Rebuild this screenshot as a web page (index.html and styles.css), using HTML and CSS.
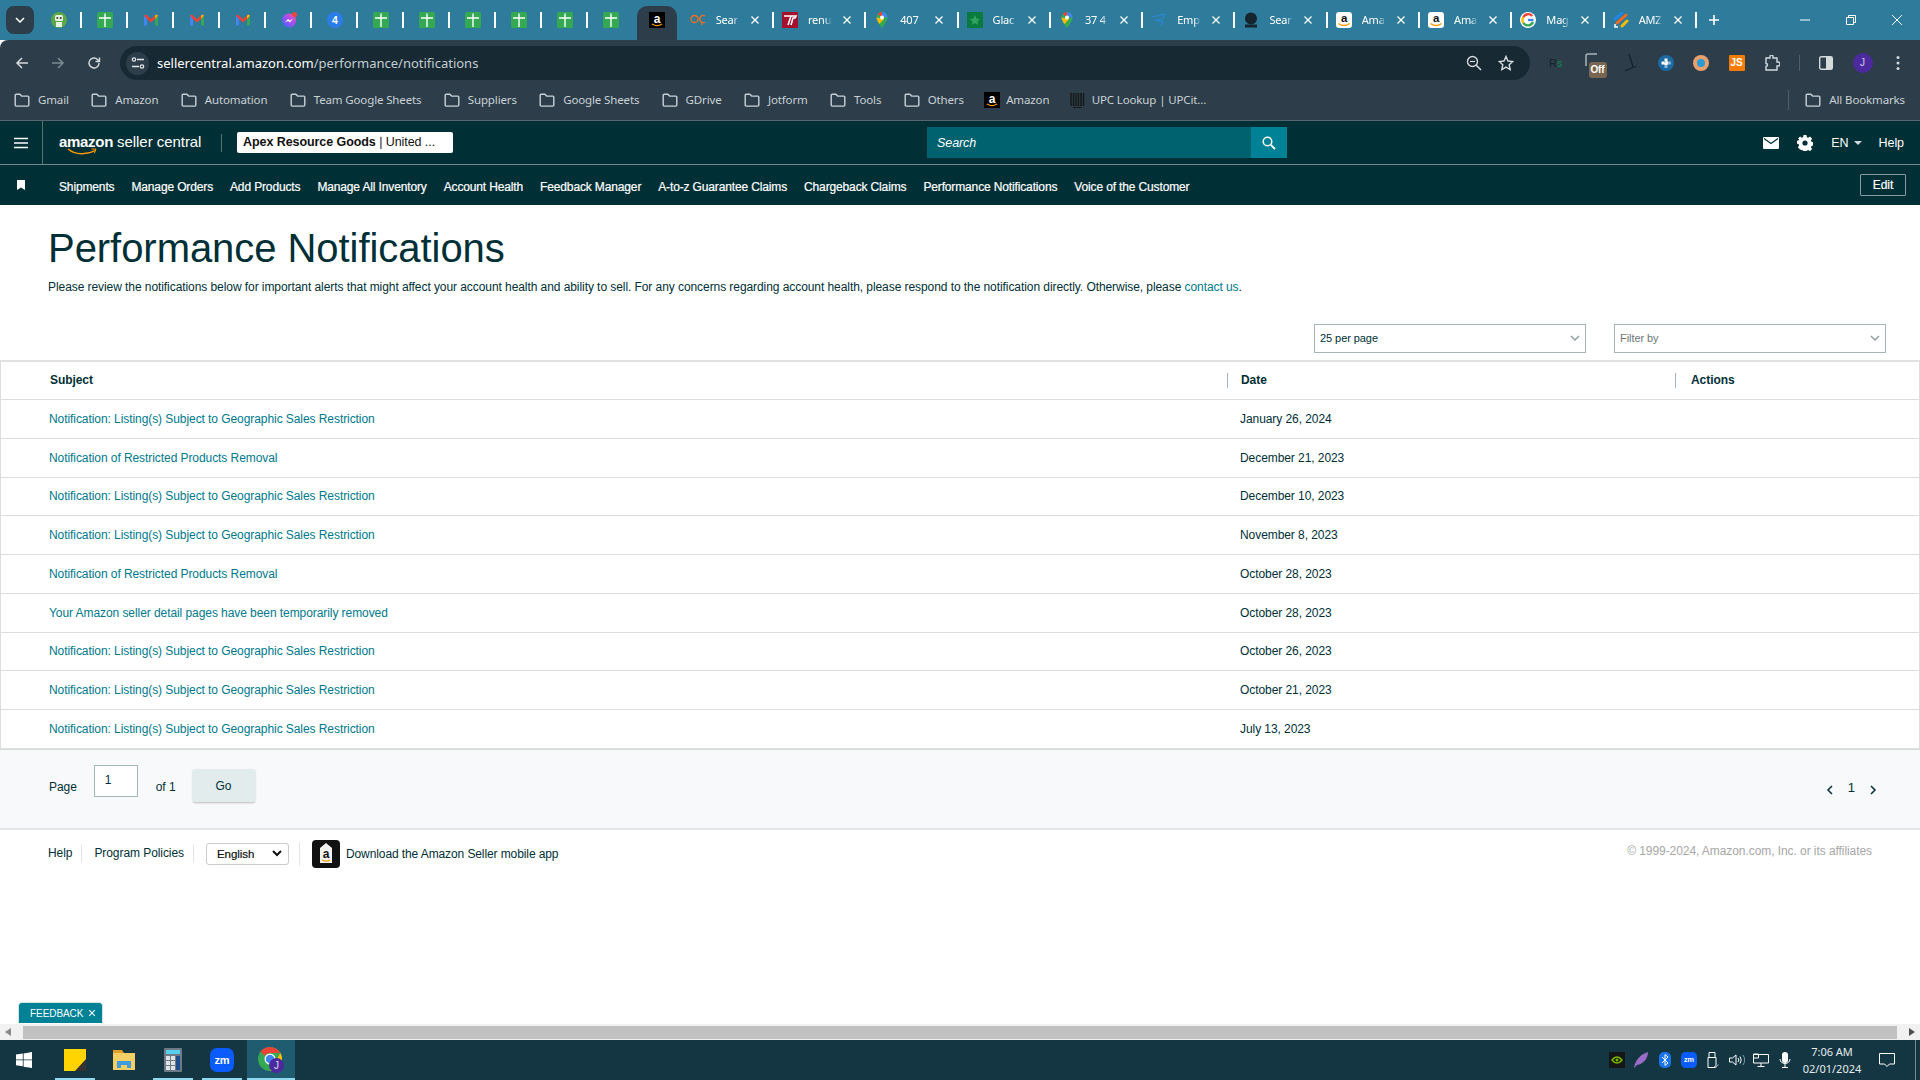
FILE: index.html
```html
<!DOCTYPE html>
<html lang="en">
<head>
<meta charset="utf-8">
<title>Performance Notifications</title>
<link rel="stylesheet" href="styles.css">
</head>
<body>
<svg class="defs" width="0" height="0" aria-hidden="true">
  <symbol id="folder" viewBox="0 0 16 16"><path d="M1.2 3.2a1 1 0 0 1 1-1h3.6l1.8 1.9h6.2a1 1 0 0 1 1 1v8a1 1 0 0 1-1 1H2.2a1 1 0 0 1-1-1z" fill="none" stroke="#c9d1d6" stroke-width="1.4"/></symbol>
  <symbol id="sheet" viewBox="0 0 16 16"><rect width="16" height="16" rx="1.5" fill="#34a853"/><path d="M2 6h12M8 1.500V15" stroke="#fff" stroke-width="1.400"/></symbol>
  <symbol id="gmail" viewBox="0 0 16 16"><path d="M1 3.500v10h3V6z" fill="#4285f4"/><path d="M12 6v7.500h3v-10z" fill="#34a853"/><path d="M1 3.500l2-1 5 4.500 5-4.500 2 1L12 7l-4 3.500L4 7z" fill="#ea4335"/><path d="M12 4l1-1.500 2 1L12 6.800z" fill="#fbbc04"/></symbol>
  <symbol id="amz" viewBox="0 0 16 16"><rect width="16" height="16" fill="#000"/><text x="8" y="10.500" text-anchor="middle" font-family="Liberation Sans" font-weight="700" font-size="12" fill="#fff">a</text><path d="M3 12c3 2 7 2 10 0" fill="none" stroke="#f90" stroke-width="1.300"/></symbol>
  <symbol id="amzw" viewBox="0 0 16 16"><rect width="16" height="16" rx="3" fill="#fff"/><text x="8" y="10" text-anchor="middle" font-family="Liberation Sans" font-weight="700" font-size="11.500" fill="#111">a</text><path d="M2.500 11.500c3.500 2.600 7.500 2.600 11 0" fill="none" stroke="#f90" stroke-width="1.500"/></symbol>
  <symbol id="maps" viewBox="0 0 16 16"><path d="M8 0a5.500 5.500 0 0 0-5.500 5.500C2.500 9.500 8 16 8 16s5.500-6.500 5.500-10.500A5.500 5.500 0 0 0 8 0z" fill="#34a853"/><path d="M8 0a5.500 5.500 0 0 0-4.200 2l4.200 3.500z" fill="#ea4335"/><path d="M8 0a5.500 5.500 0 0 1 5.500 5.500L8 5.500z" fill="#4285f4"/><path d="M2.500 5.500C2.500 7.500 4 10 5.500 12L10 7z" fill="#fbbc04"/><circle cx="8" cy="5.500" r="2" fill="#fff"/></symbol>
  <symbol id="close" viewBox="0 0 10 10"><path d="M1.500 1.500l7 7M8.500 1.500l-7 7" stroke="#fff" stroke-width="1.300"/></symbol>
  <symbol id="zm" viewBox="0 0 24 24"><rect width="24" height="24" rx="7" fill="#0b5cff"/><text x="12" y="15.500" text-anchor="middle" font-family="Liberation Sans" font-weight="700" font-size="11" fill="#fff">zm</text></symbol>
</svg>

<div class="page">
  <header class="tabstrip">
    <div class="tabmenu"><svg width="10" height="6" viewBox="0 0 10 6"><path d="M1 1l4 4 4-4" fill="none" stroke="#fff" stroke-width="1.500"/></svg></div>
    <div class="ptab sep"><svg class="fav" viewBox="0 0 16 16"><circle cx="8" cy="8" r="8" fill="#5aa846"/><rect x="4" y="3" width="8" height="6" rx="1.500" fill="#e8f2e4"/><circle cx="6.300" cy="6" r="1" fill="#333"/><circle cx="9.700" cy="6" r="1" fill="#333"/><rect x="5" y="10" width="6" height="5" fill="#e8f2e4"/></svg></div>
    <div class="ptab sep"><svg class="fav"><use href="#sheet"/></svg></div>
    <div class="ptab sep"><svg class="fav"><use href="#gmail"/></svg></div>
    <div class="ptab sep"><svg class="fav"><use href="#gmail"/></svg></div>
    <div class="ptab sep"><svg class="fav"><use href="#gmail"/></svg></div>
    <div class="ptab sep"><svg class="fav" viewBox="0 0 16 16"><defs><linearGradient id="ms" x1="0" y1="1" x2="1" y2="0"><stop offset="0" stop-color="#2f6bff"/><stop offset=".6" stop-color="#b44bf0"/><stop offset="1" stop-color="#ff5c7a"/></linearGradient></defs><circle cx="8" cy="8.500" r="7" fill="url(#ms)"/><path d="M4 10.500l3-3.500 2 1.500 3-2-3 4-2-1.500z" fill="#fff"/><circle cx="13.500" cy="2.500" r="2.500" fill="#f0453a"/></svg></div>
    <div class="ptab sep"><svg class="fav" viewBox="0 0 16 16"><circle cx="8" cy="8" r="8" fill="#2b7de9"/><text x="8" y="11.800" text-anchor="middle" font-family="Liberation Sans" font-weight="700" font-size="10.500" fill="#fff">4</text></svg></div>
    <div class="ptab sep"><svg class="fav"><use href="#sheet"/></svg></div>
    <div class="ptab sep"><svg class="fav"><use href="#sheet"/></svg></div>
    <div class="ptab sep"><svg class="fav"><use href="#sheet"/></svg></div>
    <div class="ptab sep"><svg class="fav"><use href="#sheet"/></svg></div>
    <div class="ptab sep"><svg class="fav"><use href="#sheet"/></svg></div>
    <div class="ptab"><svg class="fav"><use href="#sheet"/></svg></div>
    <div class="activetab"><svg class="fav"><use href="#amz"/></svg></div>
    <div class="tab sep"><svg class="fav" viewBox="0 0 16 16"><circle cx="4.500" cy="7" r="3.500" fill="none" stroke="#f0701c" stroke-width="1.300"/><path d="M15 4a3.500 3.500 0 1 0 0 6M12 10v3" fill="none" stroke="#f0701c" stroke-width="1.300"/></svg><span class="tabtext">Sear</span><svg class="tabx"><use href="#close"/></svg></div>
    <div class="tab sep"><svg class="fav" viewBox="0 0 16 16"><rect width="16" height="16" fill="#a5112d"/><path d="M2 4h7L6 13M8 4h6l-1 2h-2l-2 7" fill="none" stroke="#fff" stroke-width="1.600"/></svg><span class="tabtext">renu</span><svg class="tabx"><use href="#close"/></svg></div>
    <div class="tab sep"><svg class="fav"><use href="#maps"/></svg><span class="tabtext">407</span><svg class="tabx"><use href="#close"/></svg></div>
    <div class="tab sep"><svg class="fav" viewBox="0 0 16 16"><rect width="16" height="16" fill="#0a7a3e"/><path d="M8 3l1.500 3.500L13 7l-2.500 2.500.5 3.500L8 11l-3 2 .5-3.500L3 7l3.500-.5z" fill="#2fa35f"/></svg><span class="tabtext">Glac</span><svg class="tabx"><use href="#close"/></svg></div>
    <div class="tab sep"><svg class="fav"><use href="#maps"/></svg><span class="tabtext">37 4</span><svg class="tabx"><use href="#close"/></svg></div>
    <div class="tab sep"><svg class="fav" viewBox="0 0 16 16"><path d="M1 5l13-3-2 5-8 1 8 2-3 4" fill="none" stroke="#2a86c8" stroke-width="1.300"/></svg><span class="tabtext">Emp</span><svg class="tabx"><use href="#close"/></svg></div>
    <div class="tab sep"><svg class="fav" viewBox="0 0 16 16"><circle cx="8" cy="6.500" r="6" fill="#15252e"/><rect x="2" y="12.500" width="12" height="3" fill="#15252e"/></svg><span class="tabtext">Sear</span><svg class="tabx"><use href="#close"/></svg></div>
    <div class="tab sep"><svg class="fav"><use href="#amzw"/></svg><span class="tabtext">Ama</span><svg class="tabx"><use href="#close"/></svg></div>
    <div class="tab sep"><svg class="fav"><use href="#amzw"/></svg><span class="tabtext">Ama</span><svg class="tabx"><use href="#close"/></svg></div>
    <div class="tab sep"><svg class="fav" viewBox="0 0 16 16"><circle cx="8" cy="8" r="8" fill="#fff"/><path d="M13.500 8H8" stroke="#4285f4" stroke-width="2.400"/><path d="M12.300 4A5.500 5.500 0 0 0 3.300 5.200" fill="none" stroke="#ea4335" stroke-width="2.400"/><path d="M3.300 5.200a5.500 5.500 0 0 0 0 5.600" fill="none" stroke="#fbbc04" stroke-width="2.400"/><path d="M3.300 10.800A5.500 5.500 0 0 0 13 10" fill="none" stroke="#34a853" stroke-width="2.400"/></svg><span class="tabtext">Mag</span><svg class="tabx"><use href="#close"/></svg></div>
    <div class="tab sep"><svg class="fav" viewBox="0 0 16 16"><path d="M2 7L9 1" stroke="#1e88e5" stroke-width="3" stroke-linecap="round"/><path d="M4 11l9-8" stroke="#f4691e" stroke-width="3" stroke-linecap="round"/><path d="M9 14l5-5" stroke="#fbbc04" stroke-width="3" stroke-linecap="round"/><path d="M2 12v3h3" fill="none" stroke="#fff" stroke-width="1.500"/></svg><span class="tabtext">AMZ</span><svg class="tabx"><use href="#close"/></svg></div>
    <svg class="newtab" viewBox="0 0 12 12"><path d="M6 1v10M1 6h10" stroke="#fff" stroke-width="1.600"/></svg>
    <div class="winctl">
      <svg width="10" height="10" viewBox="0 0 10 10"><path d="M0 5h10" stroke="#fff"/></svg>
      <svg width="10" height="10" viewBox="0 0 10 10"><path d="M.5 2.500h7v7h-7zM2.500 2.500v-2h7v7h-2" fill="none" stroke="#fff"/></svg>
      <svg width="10" height="10" viewBox="0 0 10 10"><path d="M0 0l10 10M10 0L0 10" stroke="#fff"/></svg>
    </div>
  </header>

  <div class="toolbar">
    <div class="navbtns">
      <svg width="14" height="14" viewBox="0 0 14 14"><path d="M13 7H2M7 2L2 7l5 5" fill="none" stroke="#d5dadd" stroke-width="1.500"/></svg>
      <svg width="14" height="14" viewBox="0 0 14 14"><path d="M1 7h11M7 2l5 5-5 5" fill="none" stroke="#7c8a93" stroke-width="1.500"/></svg>
      <svg width="14" height="14" viewBox="0 0 14 14"><path d="M12 7a5 5 0 1 1-1.500-3.600L12.500 5.500M12.500 1.500v4h-4" fill="none" stroke="#d5dadd" stroke-width="1.400"/></svg>
    </div>
    <div class="omnibox">
      <span class="chip"><svg width="14" height="12" viewBox="0 0 14 12"><path d="M6 2.500h7M1 9.500h7" stroke="#e3e7ea" stroke-width="1.400"/><circle cx="3" cy="2.500" r="1.700" fill="none" stroke="#e3e7ea" stroke-width="1.200"/><circle cx="11" cy="9.500" r="1.700" fill="none" stroke="#e3e7ea" stroke-width="1.200"/></svg></span>
      <span class="url">sellercentral.amazon.com<span class="urlpath">/performance/notifications</span></span>
      <svg class="omni-zoom" width="16" height="16" viewBox="0 0 16 16"><circle cx="6.500" cy="6.500" r="5" fill="none" stroke="#d5dadd" stroke-width="1.400"/><path d="M10.300 10.300L15 15" stroke="#d5dadd" stroke-width="1.600"/><path d="M4 6.500h5" stroke="#d5dadd" stroke-width="1.200"/></svg>
      <svg class="omni-star" width="16" height="16" viewBox="0 0 16 16"><path d="M8 1.500l2 4.500 4.800.5-3.600 3.200 1 4.800L8 12.100l-4.200 2.400 1-4.800L1.200 6.500 6 6z" fill="none" stroke="#d5dadd" stroke-width="1.400"/></svg>
    </div>
    <div class="exts">
      <span class="ext-rs"><b class="rs-r">R</b><b class="rs-s">s</b></span>
      <span class="ext-off"><svg width="14" height="14" viewBox="0 0 14 14"><path d="M1 13V3a2 2 0 0 1 2-2h9" fill="none" stroke="#aab4ba" stroke-width="1.500"/></svg><span class="offbadge">Off</span></span>
      <svg width="14" height="20" viewBox="0 0 14 20"><path d="M5 1l4 13M1 18l11-5" stroke="#16222a" stroke-width="1.300"/></svg>
      <svg width="16" height="16" viewBox="0 0 16 16"><circle cx="8" cy="8" r="8" fill="#1c6aa5"/><path d="M8 3.500v9M3.500 8h9" stroke="#fff" stroke-width="3" stroke-dasharray="3 1"/></svg>
      <svg width="16" height="16" viewBox="0 0 16 16"><circle cx="8" cy="8" r="8" fill="#e9a06f"/><circle cx="8" cy="8" r="4" fill="#2b9bd6"/></svg>
      <span class="ext-js">JS</span>
      <svg width="16" height="16" viewBox="0 0 16 16"><path d="M2 3h4V1.500a1.500 1.500 0 0 1 3 0V3h4v4h1a1.500 1.500 0 0 1 0 4h-1v4H2v-3.500a1.500 1.500 0 0 0 0-3z" fill="none" stroke="#d5dadd" stroke-width="1.400"/></svg>
      <span class="tooldiv"></span>
      <svg width="14" height="14" viewBox="0 0 14 14"><rect x=".7" y=".7" width="12.600" height="12.600" rx="1.500" fill="none" stroke="#d5dadd" stroke-width="1.400"/><rect x="7" y="1" width="6" height="12" fill="#d5dadd"/></svg>
      <span class="avatar">J</span>
      <svg class="dots" width="4" height="16" viewBox="0 0 4 16"><circle cx="2" cy="2.500" r="1.500" fill="#d5dadd"/><circle cx="2" cy="8" r="1.500" fill="#d5dadd"/><circle cx="2" cy="13.500" r="1.500" fill="#d5dadd"/></svg>
    </div>
  </div>

  <nav class="bookmarks">
    <a class="bm"><svg class="bmi"><use href="#folder"/></svg>Gmail</a>
    <a class="bm"><svg class="bmi"><use href="#folder"/></svg>Amazon</a>
    <a class="bm"><svg class="bmi"><use href="#folder"/></svg>Automation</a>
    <a class="bm"><svg class="bmi"><use href="#folder"/></svg>Team Google Sheets</a>
    <a class="bm"><svg class="bmi"><use href="#folder"/></svg>Suppliers</a>
    <a class="bm"><svg class="bmi"><use href="#folder"/></svg>Google Sheets</a>
    <a class="bm"><svg class="bmi"><use href="#folder"/></svg>GDrive</a>
    <a class="bm"><svg class="bmi"><use href="#folder"/></svg>Jotform</a>
    <a class="bm"><svg class="bmi"><use href="#folder"/></svg>Tools</a>
    <a class="bm"><svg class="bmi"><use href="#folder"/></svg>Others</a>
    <a class="bm bm-fav"><svg class="bmi"><use href="#amz"/></svg>Amazon</a>
    <a class="bm bm-fav"><svg class="bmi" viewBox="0 0 16 16"><path d="M1 1v13M3.500 1v13M6 1v13M8.500 1v13M11 1v13M13.500 1v13" stroke="#16181a" stroke-width="1.500"/><path d="M3 15.500h9" stroke="#16181a"/></svg>UPC Lookup | UPCit...</a>
    <span class="bmdiv"></span>
    <a class="bm"><svg class="bmi"><use href="#folder"/></svg>All Bookmarks</a>
  </nav>

  <div class="sc-top">
    <button class="burger" aria-label="Menu"><svg width="14" height="12" viewBox="0 0 14 12"><path d="M0 1.500h14M0 6h14M0 10.500h14" stroke="#fff" stroke-width="1.500"/></svg></button>
    <div class="logo"><b class="logo-a">amazon</b><span class="logo-s">seller central</span><svg class="smile" width="30" height="8" viewBox="0 0 30 8"><path d="M1 1c7 6 19 6 27 1.500" fill="none" stroke="#f90" stroke-width="1.400"/><path d="M24.500 1H29l-1.500 4" fill="none" stroke="#f90" stroke-width="1"/></svg></div>
    <span class="logodiv"></span>
    <div class="acct"><b>Apex Resource Goods</b> | United ...</div>
    <div class="search"><span class="search-in">Search</span><span class="search-btn"><svg width="14" height="14" viewBox="0 0 14 14"><circle cx="5.500" cy="5.500" r="4.300" fill="none" stroke="#fff" stroke-width="1.500"/><path d="M8.800 8.800L13 13" stroke="#fff" stroke-width="1.800"/></svg></span></div>
    <div class="sc-right">
      <svg class="mail" width="16" height="12" viewBox="0 0 16 12"><rect width="16" height="12" rx="1" fill="#fff"/><path d="M1 1.500l7 5 7-5" fill="none" stroke="#002f36" stroke-width="1.300"/></svg>
      <svg class="gear" width="16" height="16" viewBox="0 0 16 16"><path d="M6.500 0h3l.4 2.200 1.300.6L13 1.600l2.100 2.100-1.200 1.800.6 1.300 2 .7v3l-2 .4-.6 1.300 1.200 1.900-2.100 2.100-1.800-1.200-1.300.6-.4 2.200h-3l-.4-2.200-1.300-.6L3 14.400.9 12.300l1.200-1.900-.6-1.300L-.5 8.700v-3l2-.3.6-1.300L.9 3.700 3 1.600l1.800 1.200 1.300-.6z" fill="#fff"/><circle cx="8" cy="8" r="2.600" fill="#002f36"/></svg>
      <span class="lang">EN</span><span class="caret"></span>
      <span class="sc-help">Help</span>
    </div>
  </div>

  <div class="sc-nav">
    <svg class="pin" width="8" height="10" viewBox="0 0 8 10"><path d="M0 0h8v10L4 7.500 0 10z" fill="#fff"/></svg>
    <a>Shipments</a><a>Manage Orders</a><a>Add Products</a><a>Manage All Inventory</a><a>Account Health</a><a>Feedback Manager</a><a>A-to-z Guarantee Claims</a><a>Chargeback Claims</a><a>Performance Notifications</a><a>Voice of the Customer</a>
    <button class="edit">Edit</button>
  </div>

  <main class="content">
    <h1 class="title">Performance Notifications</h1>
    <p class="desc">Please review the notifications below for important alerts that might affect your account health and ability to sell. For any concerns regarding account health, please respond to the notification directly. Otherwise, please <a class="link">contact us</a>.</p>
    <div class="controls">
      <div class="sel sel-page"><span>25 per page</span><svg width="10" height="6" viewBox="0 0 10 6"><path d="M1 1l4 4 4-4" fill="none" stroke="#8a9a9c" stroke-width="1.300"/></svg></div>
      <div class="sel sel-filter"><span class="muted">Filter by</span><svg width="10" height="6" viewBox="0 0 10 6"><path d="M1 1l4 4 4-4" fill="none" stroke="#8a9a9c" stroke-width="1.300"/></svg></div>
    </div>
    <table class="grid">
      <colgroup><col class="c1"><col class="c2"><col class="c3"></colgroup>
      <thead><tr><th>Subject</th><th class="th-d"><span>Date</span></th><th class="th-a"><span>Actions</span></th></tr></thead>
      <tbody>
        <tr><td><a class="link">Notification: Listing(s) Subject to Geographic Sales Restriction</a></td><td>January 26, 2024</td><td></td></tr>
        <tr><td><a class="link">Notification of Restricted Products Removal</a></td><td>December 21, 2023</td><td></td></tr>
        <tr><td><a class="link">Notification: Listing(s) Subject to Geographic Sales Restriction</a></td><td>December 10, 2023</td><td></td></tr>
        <tr><td><a class="link">Notification: Listing(s) Subject to Geographic Sales Restriction</a></td><td>November 8, 2023</td><td></td></tr>
        <tr><td><a class="link">Notification of Restricted Products Removal</a></td><td>October 28, 2023</td><td></td></tr>
        <tr><td><a class="link">Your Amazon seller detail pages have been temporarily removed</a></td><td>October 28, 2023</td><td></td></tr>
        <tr><td><a class="link">Notification: Listing(s) Subject to Geographic Sales Restriction</a></td><td>October 26, 2023</td><td></td></tr>
        <tr><td><a class="link">Notification: Listing(s) Subject to Geographic Sales Restriction</a></td><td>October 21, 2023</td><td></td></tr>
        <tr><td><a class="link">Notification: Listing(s) Subject to Geographic Sales Restriction</a></td><td>July 13, 2023</td><td></td></tr>
      </tbody>
    </table>
    <div class="pager">
      <span>Page</span><span class="pageinput">1</span><span>of 1</span><button class="go">Go</button>
      <div class="pager-r">
        <svg width="7" height="10" viewBox="0 0 7 10"><path d="M6 1L2 5l4 4" fill="none" stroke="#002f36" stroke-width="1.500"/></svg>
        <span class="pnum">1</span>
        <svg width="7" height="10" viewBox="0 0 7 10"><path d="M1 1l4 4-4 4" fill="none" stroke="#002f36" stroke-width="1.500"/></svg>
      </div>
    </div>
    <footer class="foot">
      <a class="foot-l">Help</a>
      <a class="foot-l foot-p">Program Policies</a>
      <div class="foot-lang"><span>English</span><svg width="10" height="7" viewBox="0 0 10 7"><path d="M1 1l4 4 4-4" fill="none" stroke="#111" stroke-width="2"/></svg></div>
      <span class="appsep"></span>
      <svg class="appicon" width="28" height="28" viewBox="0 0 28 28"><rect width="28" height="28" rx="4" fill="#111"/><path d="M8 8l6-5 6 5v15H8z" fill="#f2f2f2"/><text x="14" y="18" text-anchor="middle" font-family="Liberation Sans" font-weight="700" font-size="12" fill="#111">a</text><path d="M10 20c3 1.500 6 1.500 8 0" fill="none" stroke="#f90" stroke-width="1.200"/></svg>
      <span class="dl">Download the Amazon Seller mobile app</span>
      <span class="copy">© 1999-2024, Amazon.com, Inc. or its affiliates</span>
    </footer>
    <div class="feedback">FEEDBACK<svg width="8" height="8"><use href="#close"/></svg></div>
  </main>

  <div class="hscroll">
    <svg width="6" height="8" viewBox="0 0 6 8"><path d="M6 0v8L0 4z" fill="#8a8a8a"/></svg>
    <span class="thumb"></span>
    <svg width="6" height="8" viewBox="0 0 6 8"><path d="M0 0v8l6-4z" fill="#505050"/></svg>
  </div>

  <div class="taskbar">
    <span class="tb tb-win"><svg width="16" height="16" viewBox="0 0 16 16"><path d="M0 2.500l6.800-1v6H0zM7.600 1.400L16 0v7.500H7.600zM0 8.300h6.800v6l-6.800-1zM7.600 8.300H16V16l-8.400-1.300z" fill="#fff"/></svg></span>
    <span class="tb tb-on"><svg width="22" height="22" viewBox="0 0 22 22"><rect width="22" height="22" fill="#ffd400"/><path d="M22 10v12H11z" fill="#333"/></svg></span>
    <span class="tb"><svg width="22" height="20" viewBox="0 0 22 20"><path d="M0 0h9l2 3H0z" fill="#e0a028"/><rect y="3" width="22" height="17" fill="#f6cf64"/><path d="M4 18v-7h14v7h-4v-3h-6v3z" fill="#3d9be0"/></svg></span>
    <span class="tb tb-on"><svg width="18" height="24" viewBox="0 0 18 24"><rect width="18" height="24" rx="1" fill="#6e7b85"/><rect x="2" y="2" width="14" height="4" fill="#55d0ee"/><path d="M2 8h4v4H2zM7 8h4v4H7zM2 13h4v4H2zM7 13h4v4H7zM2 18h4v4H2zM7 18h4v4H7z" fill="#dfe4e8"/><rect x="12" y="8" width="4" height="14" fill="#1e4f8c"/></svg></span>
    <span class="tb tb-zm"><svg width="24" height="24"><use href="#zm"/></svg></span>
    <span class="tb tb-chrome"><svg width="26" height="26" viewBox="0 0 26 26"><circle cx="12" cy="12" r="12" fill="#34a853"/><path d="M12 0a12 12 0 0 1 10.400 6H12a6 6 0 0 0-5.200 3L2.500 4.500A12 12 0 0 1 12 0z" fill="#ea4335"/><path d="M22.400 6A12 12 0 0 1 12 24l5-9z" fill="#fbbc04"/><circle cx="12" cy="12" r="5.500" fill="#fff"/><circle cx="12" cy="12" r="4.300" fill="#4285f4"/><circle cx="18.500" cy="18.500" r="7.500" fill="#4b2a9e"/><text x="18.500" y="22" text-anchor="middle" font-family="Liberation Sans" font-size="10" fill="#e4dcf7">J</text></svg></span>
    <div class="tray">
      <div class="trayicons">
        <svg width="16" height="16" viewBox="0 0 16 16"><rect width="16" height="16" fill="#161616"/><path d="M3 8c3-4 7-4 10 0-3 4-7 4-10 0z" fill="none" stroke="#76b900" stroke-width="1.500"/><circle cx="8" cy="8" r="1.500" fill="#76b900"/></svg>
        <svg width="16" height="16" viewBox="0 0 16 16"><path d="M1 16C2 8 8 2 15 0c0 7-5 12-11 13z" fill="#9a6cc8"/></svg>
        <svg width="12" height="16" viewBox="0 0 12 16"><rect width="12" height="16" rx="5" fill="#1a73e8"/><path d="M3 5l6 6-3 2.500v-11L9 5l-6 6" fill="none" stroke="#fff"/></svg>
        <svg width="16" height="16"><use href="#zm"/></svg>
        <svg width="12" height="16" viewBox="0 0 12 16"><path d="M2 .5h6v5H2zM1 5.500h8v10H1z" fill="none" stroke="#fff"/><path d="M7 14l1.500 1.500 3-3" fill="none" stroke="#aaa"/></svg>
        <svg width="16" height="12" viewBox="0 0 16 12"><path d="M.5 4h3L7 1v10L3.500 8h-3z" fill="none" stroke="#fff"/><path d="M9 4a3 3 0 0 1 0 4M11 2.500a6 6 0 0 1 0 7" fill="none" stroke="#fff"/><path d="M14 1a9 9 0 0 1 0 10" fill="none" stroke="#7f9aa4"/></svg>
        <svg width="16" height="14" viewBox="0 0 16 14"><path d="M3 1.500h12.500v8.500H.5V1.500zM8 10v3M4.500 13.500h7M.5 1h5v4h-5z" fill="none" stroke="#fff"/></svg>
        <svg width="12" height="16" viewBox="0 0 12 16"><rect x="3" width="6" height="11" rx="3" fill="#fff"/><path d="M1 7c0 6 10 6 10 0M6 12v3M3 15.500h6" fill="none" stroke="#fff"/></svg>
      </div>
      <div class="clock"><span>7:06 AM</span><span>02/01/2024</span></div>
      <svg class="notif" width="16" height="14" viewBox="0 0 16 14"><path d="M.5.500h15v10.500h-5L8 13.500 5.500 11h-5z" fill="none" stroke="#fff"/></svg>
      <span class="showdesk"></span>
    </div>
  </div>
</div>
</body>
</html>
```

FILE: styles.css
```css
* { box-sizing: border-box; }
html, body { margin: 0; padding: 0; background: #fff; }
body { font-family: "Liberation Sans", Arial, sans-serif; font-size: 12px; letter-spacing: -.07px; color: #002f36; }
.defs { display: none; }
.page { width: 1920px; height: 1080px; display: flex; flex-direction: column; overflow: hidden; position: relative; }
svg { display: block; flex: none; }

.tabstrip { height: 40px; flex: none; background: #2e7b9b; display: flex; align-items: center; padding-left: 6px; }
.tabmenu { width: 28px; height: 28px; margin-right: 2px; border-radius: 8px; background: #2d3e4a; display: flex; align-items: center; justify-content: center; }
.fav { width: 16px; height: 16px; flex: none; }
.ptab { width: 46px; height: 16px; display: flex; align-items: center; justify-content: center; }
.sep { border-right: 2px solid #fff; }
.ptab.sep { padding-left: 2px; }
.activetab { width: 40px; height: 34px; margin: 6px 4.7px 0 3px; background: #2d3e4a; border-radius: 10px 10px 0 0; display: flex; align-items: center; justify-content: center; padding-bottom: 6px; }
.tab { width: 92.3px; height: 16px; display: flex; align-items: center; padding-left: 8px; color: #fff; font-family: "Noto Sans", sans-serif; font-size: 11px; line-height: 16px; letter-spacing: -.2px; }
.tabtext { width: 26px; margin-left: 10px; white-space: nowrap; -webkit-mask-image: linear-gradient(90deg, #000 65%, transparent 92%); mask-image: linear-gradient(90deg, #000 65%, transparent 92%); }
.tabx { width: 10px; height: 10px; margin-left: 8px; }
.newtab { width: 12px; height: 12px; margin-left: 11px; }
.winctl { margin-left: auto; display: flex; gap: 36px; padding-right: 18px; }

.toolbar { height: 40px; flex: none; background: #2d3e4a; display: flex; align-items: flex-start; padding-top: 6px; border-radius: 8px 0 0 0; }
.navbtns { display: flex; gap: 22px; align-items: center; height: 34px; padding-left: 15px; width: 120px; }
.omnibox { width: 1410px; height: 34px; background: #172933; border-radius: 17px; display: flex; align-items: center; padding-left: 6px; padding-right: 16px; }
.chip { width: 23px; height: 23px; border-radius: 50%; background: #2d3e4a; display: flex; align-items: center; justify-content: center; }
.url { margin-left: 8px; color: #fff; font-family: "Noto Sans", sans-serif; font-size: 13px; letter-spacing: 0; }
.urlpath { color: #c4cdd2; }
.omni-zoom { margin-left: auto; }
.omni-star { margin-left: 16px; }
.exts { display: flex; align-items: center; height: 34px; flex: 1; position: relative; padding-left: 19px; gap: 19.5px; }
.ext-rs { width: 16px; font-size: 11px; line-height: 1; white-space: nowrap; }
.rs-r { color: #16222a; font-weight: 400; }
.rs-s { color: #0f8a4a; font-weight: 400; }
.ext-off { position: relative; width: 20px; height: 20px; }
.offbadge { position: absolute; left: 4px; top: 9px; width: 18px; height: 16px; background: #7a6650; border-radius: 3px; color: #fff; font-size: 10px; font-weight: 700; text-align: center; line-height: 16px; }
.ext-js { width: 16px; height: 16px; background: #f57c00; color: #fff; font-size: 10px; font-weight: 700; line-height: 16px; text-align: center; border-radius: 1px; }
.tooldiv { width: 1px; height: 16px; background: #4e5f6a; margin: 0 -.5px; }
.avatar { width: 20px; height: 20px; border-radius: 50%; background: #4b2a9e; color: #d5c9f2; font-size: 10px; text-align: center; line-height: 20px; }
.dots { margin-left: 4px; }

.bookmarks { height: 41px; flex: none; background: #2d3e4a; border-bottom: 1px solid #566570; display: flex; align-items: center; padding: 0 0 1px 14px; gap: 22.3px; color: #c9d1d6; font-family: "Noto Sans", sans-serif; font-size: 11.5px; letter-spacing: -.13px; }
.bm { display: flex; align-items: center; gap: 8px; white-space: nowrap; }
.bm-fav { gap: 6px; margin-left: -2px; }
.bmi { width: 16px; height: 16px; }
.bmdiv { width: 1px; height: 20px; background: #4e5f6a; margin-left: auto; }
.bm:last-child { margin-left: -6px; margin-right: 15px; }

.sc-top { height: 44px; flex: none; background: #002f36; border-bottom: 1px solid #75898c; display: flex; align-items: center; color: #fff; }
.burger { width: 43px; height: 43px; flex: none; background: none; border: 0; border-right: 1px solid #55706f; padding: 0; display: flex; align-items: center; justify-content: center; }
.logo { position: relative; margin-left: 16px; width: 144px; display: flex; align-items: baseline; gap: 4px; font-size: 15px; margin-top: -3px; white-space: nowrap; }
.logo-a { font-size: 15px; letter-spacing: -.3px; }
.logo-s { font-weight: 400; letter-spacing: -.05px; }
.smile { position: absolute; left: 8px; top: 15px; }
.logodiv { width: 1px; height: 18px; background: #55706f; margin-left: 18px; }
.acct { margin-left: 15px; width: 216px; height: 21px; background: #fff; border-radius: 2px; color: #111; font-size: 12.5px; line-height: 21px; padding-left: 6px; white-space: nowrap; overflow: hidden; }
.search { margin-left: 474px; width: 360px; height: 31px; background: #00616f; display: flex; align-items: center; justify-content: space-between; }
.search-in { padding-left: 10px; font-style: italic; font-size: 12.5px; color: #fff; }
.search-btn { width: 36px; height: 31px; background: #008296; display: flex; align-items: center; justify-content: center; }
.sc-right { margin-left: auto; display: flex; align-items: center; padding-right: 16px; font-size: 12.5px; }
.mail { margin-right: 18px; }
.gear { margin-right: 18px; }
.caret { width: 0; height: 0; margin: 1px 0 0 5px; border: 4px solid transparent; border-top-color: #d5dadd; border-bottom: 0; }
.sc-help { margin-left: 17px; }

.sc-nav { height: 40px; flex: none; background: #002f36; display: flex; align-items: center; gap: 17px; color: #fff; font-size: 12px; letter-spacing: -.14px; -webkit-text-stroke: .2px #fff; }
.pin { margin: 0 17px 0 17px; }
.sc-nav a { white-space: nowrap; margin-top: 4px; }
.edit { margin: 0 14px 0 auto; width: 46px; height: 22px; background: none; border: 1px solid #8a9a9c; color: #fff; font: 12px "Liberation Sans", sans-serif; padding: 0; border-radius: 1px; }

.content { flex: 1; position: relative; background: #fff; overflow: hidden; padding-top: 19px; min-height: 0; }
.title { margin: 0 0 0 48px; font-size: 40px; line-height: 48px; font-weight: 400; letter-spacing: -.05px; color: #002f36; }
.desc { margin: 7px 0 0 48px; line-height: 16px; font-size: 12px; color: #002f36; white-space: nowrap; }
.link { color: #00798c; }
.controls { margin-top: 29px; display: flex; justify-content: flex-end; gap: 28px; padding-right: 34px; }
.sel { height: 29px; border: 1px solid #a6b6b6; display: flex; align-items: center; justify-content: space-between; padding: 0 5px 1px 5px; font-size: 11px; }
.sel-page { width: 272px; }
.sel-filter { width: 272px; }
.muted { color: #6c7778; }

.grid { margin-top: 7px; width: 1920px; table-layout: fixed; border-collapse: separate; border-spacing: 0; border-left: 1px solid #ddd; border-right: 1px solid #ddd; border-top: 2px solid #e0e2e2; font-size: 12px; }
.c1 { width: 1226px; }
.c2 { width: 448px; }
.grid th, .grid td { height: 38.78px; padding: 0 0 0 48px; border-bottom: 1px solid #ddd; text-align: left; font-weight: 400; }
.grid th { height: 38px; font-weight: 700; padding-left: 49px; line-height: 15px; }
.grid td + td { padding-left: 13px; }
.grid th + th { padding-left: 0; }
.th-d span { display: block; border-left: 1px solid #a6b6b6; padding-left: 13px; line-height: 15px; }
.th-a span { display: block; border-left: 1px solid #a6b6b6; padding-left: 15px; line-height: 15px; }

.pager { height: 81px; background: #f8f9fa; border-top: 1px solid #d5dbdb; border-bottom: 2px solid #e3e6e6; display: flex; align-items: center; padding: 0 0 4px 49px; position: relative; }
.pageinput { width: 44px; height: 32px; margin: -11px 18px 0 17px; background: #fff; border: 1px solid #a6b6b6; padding: 7px 0 0 10px; }
.go { width: 62px; height: 33px; margin: -2px 0 0 17px; border: 0; border-radius: 2px; background: #e3ecec; box-shadow: 0 1px 2px #bbb; color: #002f36; font: 12px "Liberation Sans", sans-serif; padding: 0; }
.pager-r { margin-left: auto; margin-right: 43px; display: flex; align-items: center; gap: 15px; padding-top: 6px; }
.pnum { font-size: 13px; margin-top: -4px; }
.foot { display: flex; align-items: center; height: 48px; padding: 0 48px; }
.foot-l { padding-right: 9px; border-right: 1px solid #e3e6e6; line-height: 17px; }
.foot-p { margin-left: 12px; }
.foot-lang { margin: 0 10px 0 12px; width: 83px; height: 22px; border: 1px solid #c8cccc; border-radius: 3px; display: flex; align-items: center; justify-content: space-between; padding: 0 6px 0 10px; color: #111; font-size: 11.5px; -webkit-text-stroke: .2px #111; }
.appsep { width: 1px; height: 24px; background: #e3e6e6; }
.appicon { margin-left: 12px; }
.dl { margin-left: 6px; letter-spacing: -.1px; }
.copy { margin: 0 0 5px auto; color: #a7a7a7; }
.feedback { position: absolute; left: 18px; bottom: 1px; width: 85px; height: 21px; background: #008296; border: 1px solid #d5e6e6; border-bottom: 0; border-radius: 4px 4px 0 0; color: #fff; font-size: 10px; display: flex; align-items: center; padding-left: 11px; gap: 5px; }

.hscroll { height: 16px; flex: none; background: #f1f1f1; display: flex; align-items: center; justify-content: space-between; padding: 0 5px; gap: 6px; }
.thumb { flex: 1; height: 13px; background: #c1c1c1; margin: 0 6px 0 6px; }

.taskbar { height: 40px; flex: none; background: #143642; display: flex; align-items: stretch; color: #fff; }
.tb { width: 49px; display: flex; align-items: center; justify-content: center; position: relative; }
.tb-on::after, .tb-zm::after, .tb-chrome::after { content: ""; position: absolute; left: 4.5px; right: 4.5px; bottom: 0; height: 2px; background: #8fd8ee; }
.tb-win { width: 50.5px; padding-right: 2px; }
.tb-chrome { background: #1f5c70; width: 48px; }
.tb-chrome::after { left: 0; right: 0; }
.tray { margin-left: auto; display: flex; align-items: center; }
.trayicons { display: grid; grid-template-columns: repeat(8, 24px); justify-items: center; align-items: center; }
.clock { width: 66px; margin-left: 2px; display: flex; flex-direction: column; align-items: center; gap: 3px; font-size: 11px; line-height: 14px; letter-spacing: 0; color: #e6ecef; font-family: "Noto Sans", sans-serif; }
.notif { margin-left: 14px; }
.showdesk { width: 1px; height: 40px; background: #6e8a95; margin-left: 20px; margin-right: 4px; }
```
